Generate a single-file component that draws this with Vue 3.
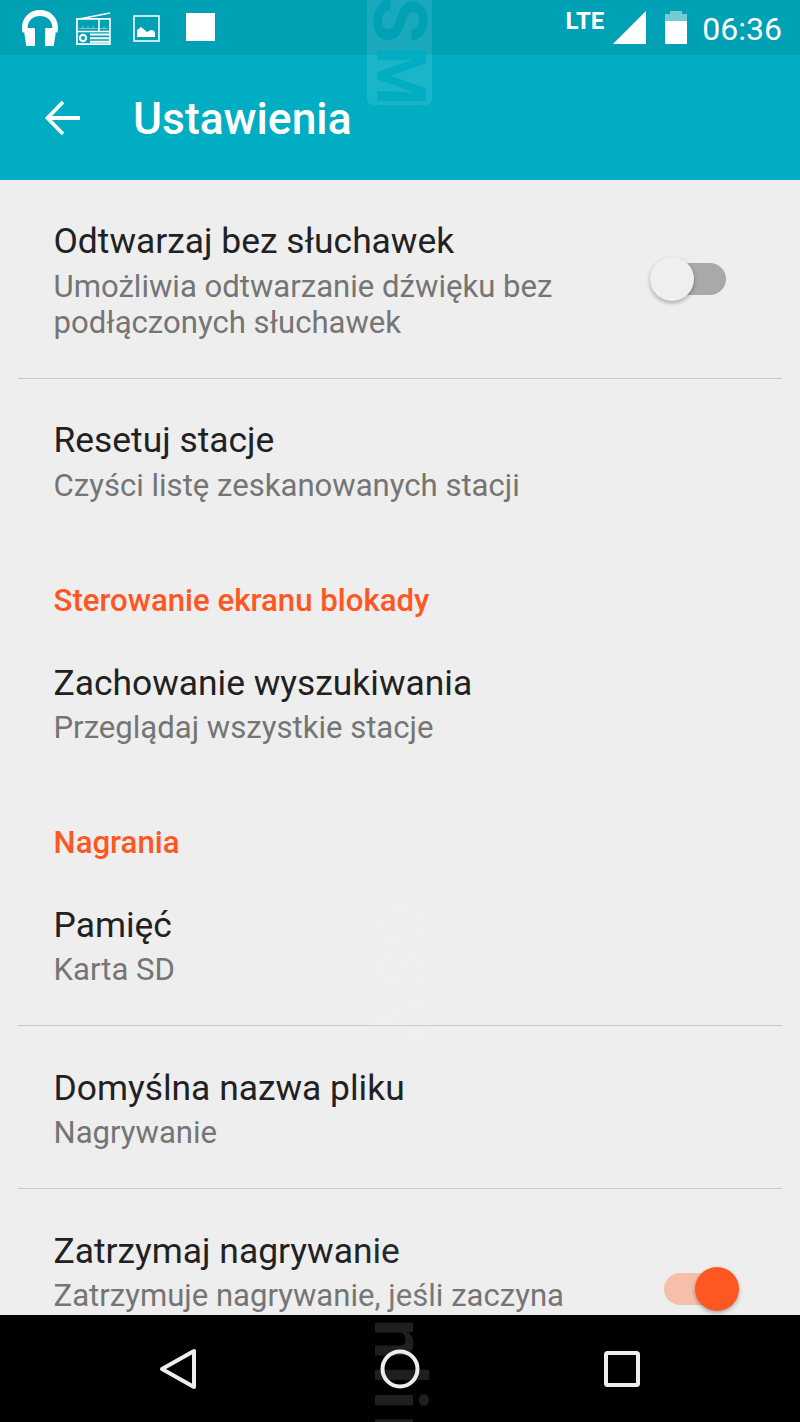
<template>
  <div class="screen">
    <div class="status-bar">
      <div class="status-left">
        <svg class="ic-phones" width="38" height="38" viewBox="21 9 38 38">
          <path fill="#fff" d="M22 28C22 17 30 10 40 10s18 7 18 18c0 2-.5 4-1 5l-4.500-5C52 20 47 16 40 16s-12 4-12.500 12L23 33c-.5-1-1-3-1-5z"/>
          <path fill="#fff" d="M27 28h6.500c1 0 1.500.5 1.500 1.500v15c0 1-.5 1.500-1.500 1.500h-6c-1 0-1.500-.5-1.500-1.500L24 31c0-2 1-3 3-3z"/>
          <path fill="#fff" d="M53 28h-6.500c-1 0-1.500.5-1.500 1.500v15c0 1 .5 1.500 1.500 1.500h6c1 0 1.500-.5 1.500-1.500L56 31c0-2-1-3-3-3z"/>
        </svg>
        <svg class="ic-radio" width="35" height="33" viewBox="76 12 35 33">
          <path fill="none" stroke="#fff" stroke-width="1.700" d="M76.800 19.500L110 13M76.900 18.900h33v25.200h-33z"/>
          <path fill="none" stroke="#fff" stroke-width="1.600" d="M77 31.500h33M99 19v12.500"/>
          <path fill="none" stroke="#fff" stroke-width=".7" opacity=".6" d="M79 28.500h29M83 26v3M88 26v3M93 26v3M104 26v3"/>
          <path fill="none" stroke="#fff" stroke-width="1.900" d="M90 34.500h19M90 38.300h19M90 41.800h19"/>
          <circle cx="83" cy="38" r="3.100" fill="none" stroke="#fff" stroke-width="2.200"/>
        </svg>
        <svg class="ic-image" width="27" height="27" viewBox="133 15 27 27">
          <path fill="none" stroke="#fff" stroke-width="1.500" d="M134 16h25v25h-25z"/>
          <path fill="#fff" d="M137 37v-7l2-1.500 2-1.500 2.500 2 3.500 3 2.500-1.500 2.500-.5 2 1 1 1.500 0 4.500z"/>
        </svg>
        <div class="stop-square"></div>
      </div>
      <div class="status-right">
        <span class="lte">LTE</span>
        <svg class="ic-signal" width="33" height="33" viewBox="0 0 33 33">
          <path fill="#fff" d="M33 0V33H0z"/>
        </svg>
        <svg class="ic-battery" width="22" height="33" viewBox="0 0 22 33">
          <path fill="#fff" opacity=".45" d="M5 0h12v3h5v8H0V3h5z"/>
          <path fill="#fff" d="M0 10h22v23H0z"/>
        </svg>
        <span class="clock">06:36</span>
      </div>
    </div>

    <header class="toolbar">
      <svg class="back" width="38" height="36" viewBox="0 0 38 36">
        <path fill="none" stroke="#fff" stroke-width="3.800" d="M36 18H4M19 2L3.500 18 19 34"/>
      </svg>
      <h1>Ustawienia</h1>
    </header>

    <main class="settings">
      <div class="row row-first">
        <div class="row-text">
          <div class="row-title">Odtwarzaj bez słuchawek</div>
          <div class="row-sub">Umożliwia odtwarzanie dźwięku bez<br>podłączonych słuchawek</div>
        </div>
        <div class="switch switch-off"><span class="thumb"></span></div>
      </div>
      <div class="divider"></div>
      <div class="row row-first">
        <div class="row-text">
          <div class="row-title">Resetuj stacje</div>
          <div class="row-sub">Czyści listę zeskanowanych stacji</div>
        </div>
      </div>

      <div class="section">Sterowanie ekranu blokady</div>
      <div class="row">
        <div class="row-text">
          <div class="row-title">Zachowanie wyszukiwania</div>
          <div class="row-sub">Przeglądaj wszystkie stacje</div>
        </div>
      </div>

      <div class="section">Nagrania</div>
      <div class="row">
        <div class="row-text">
          <div class="row-title">Pamięć</div>
          <div class="row-sub">Karta SD</div>
        </div>
      </div>
      <div class="divider"></div>
      <div class="row row-next">
        <div class="row-text">
          <div class="row-title">Domyślna nazwa pliku</div>
          <div class="row-sub">Nagrywanie</div>
        </div>
      </div>
      <div class="divider"></div>
      <div class="row row-next row-last">
        <div class="row-text">
          <div class="row-title">Zatrzymaj nagrywanie</div>
          <div class="row-sub">Zatrzymuje nagrywanie, jeśli zaczyna</div>
        </div>
        <div class="switch switch-on"><span class="thumb"></span></div>
      </div>
    </main>

    <nav class="nav-bar">
      <div class="wm-nav">nlin</div>
      <svg width="38" height="42" viewBox="0 0 38 42">
        <path fill="none" stroke="#eee" stroke-width="4" stroke-linejoin="round" d="M35 3v36L3 21z"/>
      </svg>
      <svg width="40" height="40" viewBox="0 0 40 40">
        <circle cx="20" cy="20" r="17.500" fill="none" stroke="#eee" stroke-width="4"/>
      </svg>
      <svg class="nav-square" width="36" height="36" viewBox="0 0 36 36">
        <rect x="2" y="2" width="32" height="32" rx="1.500" fill="none" stroke="#eee" stroke-width="4"/>
      </svg>
    </nav>

    <!-- watermark, sits over the whole page -->
    <div class="wm-top"><span class="wm-s">S</span><span class="wm-m">M</span></div>
    <div class="wm-faint wm-faint-a">GSM</div>
    <div class="wm-faint wm-faint-b"></div>
  </div>
</template>

<script setup>
</script>

<style>
html, body {
  margin: 0;
  background: #eeeeee;
}
</style>

<style scoped>
.screen {
  position: relative;
  width: 800px;
  height: 1422px;
  overflow: hidden;
  display: flex;
  flex-direction: column;
  background: #eeeeee;
  font-family: Roboto, sans-serif;
}

/* status bar */
.status-bar {
  height: 55px;
  flex: none;
  background: #00a0b5;
  display: flex;
  justify-content: space-between;
  color: #fff;
}
.status-left {
  display: flex;
  align-items: flex-start;
  padding: 9px 0 0 21px;
}
.ic-radio { margin: 3px 0 0 17px; }
.ic-image { margin: 6px 0 0 22px; }
.stop-square {
  width: 29px;
  height: 28px;
  margin: 4px 0 0 26px;
  background: #fff;
}
.status-right {
  display: flex;
  align-items: flex-start;
  padding: 11px 18px 0 0;
}
.lte {
  font-size: 24px;
  font-weight: 700;
  line-height: 20px;
  margin-right: 9px;
}
.ic-signal { margin-right: 19px; }
.clock {
  font-size: 32px;
  line-height: 36px;
  margin-left: 15px;
}

/* toolbar */
.toolbar {
  height: 125px;
  flex: none;
  background: #00adc2;
  display: flex;
  align-items: center;
  padding-left: 44px;
}
.back { margin-right: 51px; }
.toolbar h1 {
  margin: 2px 0 0;
  font-size: 44.400px;
  font-weight: 500;
  color: #fff;
}

/* list */
.settings {
  flex: 1;
  min-height: 0;
  overflow: hidden;
}
.row {
  display: flex;
  align-items: center;
  justify-content: space-between;
  padding: 40px 0 37px 53.500px;
}
.row-next { padding-top: 41px; }
.row-last .row-text { min-height: 120px; }
.row-title {
  font-size: 35.400px;
  line-height: 42px;
  color: #212121;
}
.row-sub {
  font-size: 31.100px;
  line-height: 36px;
  color: #757575;
  margin-top: 6px;
}
.row-first .row-sub { margin-top: 7px; }
.divider {
  height: 1px;
  margin: 0 18px;
  background: #c9c9c9;
}
.section {
  font-size: 31.200px;
  font-weight: 500;
  line-height: 36px;
  color: #ff5722;
  padding: 42px 0 3px 53.500px;
}

.switch {
  position: relative;
  width: 62px;
  height: 32px;
  border-radius: 16px;
  margin-right: 74px;
}
.thumb {
  position: absolute;
  top: -6px;
  width: 44px;
  height: 44px;
  border-radius: 50%;
  box-shadow: 0 2px 4px rgba(0, 0, 0, .3);
}
.switch-off {
  background: #a9a9a9;
  margin-bottom: 4px;
}
.switch-off .thumb {
  left: -14px;
  background: #efefef;
}
.switch-on {
  background: #f5bfab;
  margin-bottom: 2px;
}
.switch-on .thumb {
  right: -13px;
  background: #ff5722;
}

/* nav bar */
.nav-bar {
  position: relative;
  height: 107px;
  flex: none;
  background: #000;
  display: flex;
  align-items: center;
  padding-left: 159px;
  gap: 183px;
}
.nav-bar svg { position: relative; }
.nav-square { margin-left: 1px; }
.wm-nav {
  position: absolute;
  left: 367px;
  top: 0;
  width: 65px;
  height: 107px;
  overflow: hidden;
  padding-top: 4px;
  box-sizing: border-box;
  writing-mode: vertical-rl;
  font-size: 72px;
  font-weight: 700;
  line-height: 65px;
  letter-spacing: 6px;
  color: #1f1f1f;
}

/* watermark */
.wm-top {
  position: absolute;
  left: 367px;
  top: 0;
  width: 65px;
  height: 105px;
  border-radius: 0 0 6px 6px;
  background: rgba(255, 255, 255, .1);
  overflow: hidden;
  display: flex;
  flex-direction: column;
  font-size: 74px;
  font-weight: 700;
  line-height: 65px;
}
.wm-s, .wm-m {
  writing-mode: vertical-rl;
  display: block;
}
.wm-s {
  height: 49px;
  margin-top: -3px;
  color: #00a0b5;
}
.wm-m {
  height: 59px;
  color: #00adc2;
  font-size: 68px;
}
.wm-faint {
  position: absolute;
  left: 367px;
  width: 65px;
  background: rgba(255, 255, 255, .04);
  color: rgba(255, 255, 255, .08);
  border-radius: 6px;
  writing-mode: vertical-rl;
  font-size: 68px;
  font-weight: 700;
  line-height: 65px;
  text-align: center;
}
.wm-faint-a {
  top: 880px;
  height: 190px;
}
.wm-faint-b {
  top: 1155px;
  height: 160px;
  border-radius: 6px 6px 0 0;
}
</style>
